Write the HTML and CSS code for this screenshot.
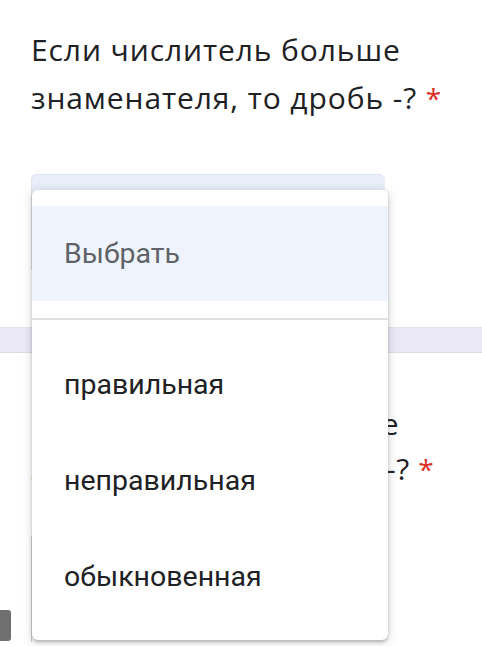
FILE: index.html
```html
<!DOCTYPE html>
<html lang="ru">
<head>
<meta charset="utf-8">
<link rel="stylesheet" href="styles.css">
</head>
<body>
<div class="page">
  <section class="card first">
    <h2 class="question">Если числитель больше<br>знаменателя, то дробь -? <span class="req">*</span></h2>
    <div class="select-field"></div>
  </section>
  <div class="gap-band"></div>
  <section class="card second">
    <h2 class="question q2">Если числитель меньше<br>знаменателя, то дробь -? <span class="req">*</span></h2>
    <div class="bottom-row">
      <div class="nub"></div>
      <div class="select-field small"></div>
    </div>
  </section>

  <div class="menu" role="listbox">
    <div class="opt placeholder">Выбрать</div>
    <div class="divider"></div>
    <div class="opt">правильная</div>
    <div class="opt">неправильная</div>
    <div class="opt">обыкновенная</div>
  </div>
</div>
</body>
</html>
```

FILE: styles.css
```css
html, body {
  margin: 0;
  padding: 0;
  background: #ffffff;
}
.page {
  position: relative;
  width: 482px;
  height: 646px;
  overflow: hidden;
  font-family: "Open Sans", "Noto Sans", sans-serif;
  color: #202124;
}
.card {
  padding-left: 31px;
}
.first {
  padding-top: 26px;
  height: 303px;
  box-sizing: border-box;
}
.question {
  margin: 0;
  font-weight: 400;
  font-size: 30px;
  line-height: 48px;
  letter-spacing: 0.9px;
}
.req {
  color: #d93025;
  font-size: 28px;
}
.select-field {
  margin-top: 52px;
  width: 354px;
  height: 96px;
  background: #e8effa;
  border-radius: 6px 6px 0 0;
  box-shadow: inset 0 1px 0 #dfe3ec, inset 1px 0 0 #dfe3ec;
}
.gap-band {
  height: 24px;
  margin-top: 24px;
  background: #ece9f7;
  border-top: 1px solid #e4e2ee;
  border-bottom: 1px solid #dadce0;
}
.second {
  padding-top: 48px;
}
.q2 {
  line-height: 45px;
  letter-spacing: 0.6px;
}
.bottom-row {
  display: flex;
  align-items: flex-start;
  margin-left: -31px;
  margin-top: 40px;
}
.nub {
  width: 11px;
  height: 31px;
  margin-top: 78px;
  background: #6f6f6f;
  border-radius: 0 3px 3px 0;
}
.select-field.small {
  margin: 0 0 0 20px;
  height: 110px;
  background: #ffffff;
  box-shadow: inset 1px 0 0 #d0d0d0;
}
.menu {
  position: absolute;
  left: 32px;
  top: 190px;
  width: 356px;
  height: 450px;
  box-sizing: border-box;
  padding: 16px 0;
  background: #ffffff;
  border-radius: 6px;
  box-shadow: 0 2px 3px rgba(60, 64, 67, 0.3), 0 2px 8px 2px rgba(60, 64, 67, 0.15);
  font-family: Roboto, "Noto Sans", sans-serif;
}
.opt {
  height: 96px;
  display: flex;
  align-items: center;
  padding-left: 32px;
  font-size: 28.5px;
  color: #202124;
}
.placeholder {
  height: 95px;
  background: #eef3fc;
  color: #5f6368;
}
.divider {
  height: 2px;
  margin: 17px 0 16px;
  background: #e0e0e0;
}
```
